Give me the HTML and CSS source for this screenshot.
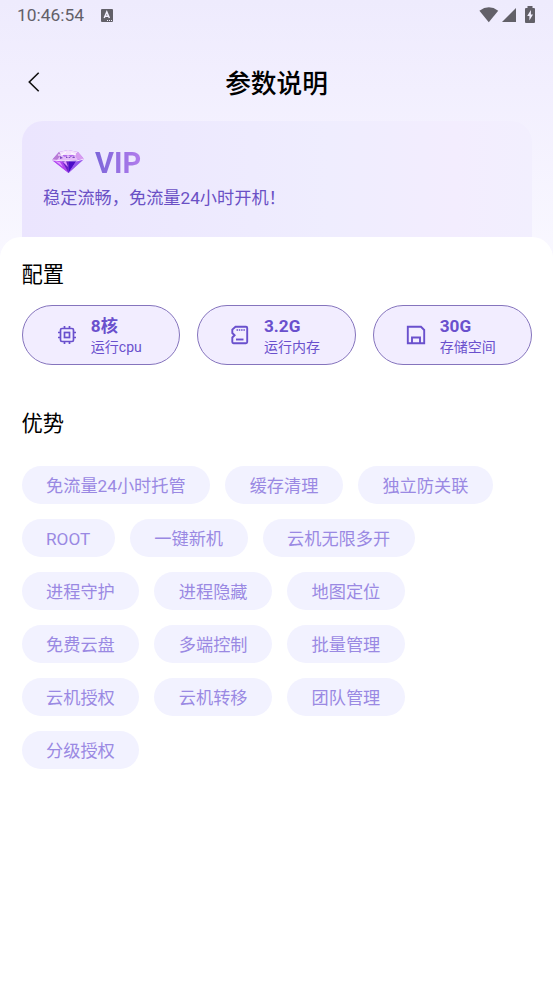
FILE: index.html
```html
<!DOCTYPE html>
<html lang="zh-CN">
<head>
<meta charset="utf-8">
<title>参数说明</title>
<meta name="viewport" content="width=device-width, initial-scale=1">
<link rel="stylesheet" href="styles.css">
</head>
<body>
<div class="status-bar">
  <span class="time">10:46:54</span>
  <svg class="ime" width="12" height="13" viewBox="0 0 12 13"><rect width="12" height="13" rx="1" fill="#626068"/><path d="M3.2 9L5.800 3L8.400 9M4.200 7.200h3.400" fill="none" stroke="#f2effd" stroke-width="1.500"/><path d="M6 11.500h1M8 11.500h1M10 11.500h1" stroke="#f2effd"/></svg>
  <div class="status-icons">
    <svg width="20" height="16" viewBox="0 0 20 16"><path d="M.4 3.7Q10-3 19.2 3.7L9.8 15.3z" fill="#626068"/></svg>
    <svg width="14" height="14" viewBox="0 0 14 14"><path d="M14 0v14H0z" fill="#626068"/></svg>
    <svg width="10" height="17" viewBox="0 0 10 17"><path d="M2.5 0h5v2H9q1 0 1 1v13q0 1-1 1H1q-1 0-1-1V3q0-1 1-1h1.500z" fill="#626068"/><path d="M5.900 4L2.200 10h2.200v4.500L8 8.500H5.900z" fill="#f2effd"/></svg>
  </div>
</div>

<div class="nav">
  <a class="back" href="#"><svg width="12" height="20" viewBox="0 0 12 20"><path d="M10.700.7L1.300 10l9.400 9.300" fill="none" stroke="#111" stroke-width="1.600"/></svg></a>
  <h1>参数说明</h1>
</div>

<div class="vip-card">
  <div class="vip-title">
    <svg width="34" height="26" viewBox="0 0 34 26">
      <path d="M1 12L8 4L17 2L27 4L33 11L17.500 25z" fill="#b56bef"/>
      <path d="M8 4L17 2L27 4L24 7L10 7z" fill="#f3e2fc"/>
      <path d="M1 12L8 4L10 7L6 12z" fill="#b87bd6"/>
      <path d="M27 4L33 11L27 12L24 7z" fill="#d79cf0"/>
      <path d="M6 12L10 7L14 9L17 7L20 9L24 7L27 12L17 13z" fill="#e4bdf8"/>
      <path d="M9 8l3 2-3 1zM15 8l2 2 3-2-1 2h-4zM23 8l1 2h-3z" fill="#7c4bc0"/>
      <path d="M1 12L11 13L17.500 25z" fill="#b044ef"/>
      <path d="M11 13L18 13L17.500 25z" fill="#6820c6"/>
      <path d="M18 13L26 12L17.500 25z" fill="#4a0cc8"/>
      <path d="M26 12L33 11L17.500 25z" fill="#9557ed"/>
      <path d="M12 14l3-1 2 6zM4 13l5 1 3 5z" fill="#e09aff"/>
      <path d="M1 12L11 12.800H26L33 11" fill="none" stroke="#f8eaff"/>
      <path d="M7 7h5M20 5l5 2M15 4l-4 3" stroke="#fff"/>
    </svg>
    <span>VIP</span>
  </div>
  <p>稳定流畅，免流量24小时开机！</p>
</div>

<div class="panel">
  <h2>配置</h2>
  <div class="specs">
    <div class="spec">
      <svg width="20" height="20" viewBox="0 0 20 20" fill="none" stroke="#6a50cd" stroke-width="1.700"><rect x="3.500" y="3.500" width="13" height="13" rx="1.500"/><rect x="7.500" y="7.500" width="5" height="5"/><path d="M7.500 1v2.500M12.500 1v2.500M7.500 16.500V19M12.500 16.500V19M1 7.500h2.500M1 12.500h2.500M16.500 7.500H19M16.500 12.500H19"/></svg>
      <div><b>8核</b><small>运行cpu</small></div>
    </div>
    <div class="spec">
      <svg width="20" height="20" viewBox="0 0 20 20" fill="none" stroke="#6a50cd" stroke-width="1.900"><path d="M5.500 1.800H16q1.200 0 1.200 1.200v14q0 1.200-1.200 1.200H3.500q-1.200 0-1.200-1.200v-4.500L4.600 10.300L2.300 8V4.600z"/><path d="M6.500 5h8.500" stroke-width="1.500" stroke-dasharray="1.500 .8"/><path d="M6 14.500h7.500"/></svg>
      <div><b>3.2G</b><small>运行内存</small></div>
    </div>
    <div class="spec">
      <svg width="20" height="20" viewBox="0 0 20 20" fill="none" stroke="#6a50cd" stroke-width="1.900"><path d="M1.800 1.800H15L18.200 5v13.200H1.800z"/><path d="M6 18v-5.500h8V18"/></svg>
      <div><b>30G</b><small>存储空间</small></div>
    </div>
  </div>

  <h2>优势</h2>
  <div class="tags">
    <span>免流量24小时托管</span>
    <span>缓存清理</span>
    <span>独立防关联</span>
    <span>ROOT</span>
    <span>一键新机</span>
    <span>云机无限多开</span>
    <span>进程守护</span>
    <span>进程隐藏</span>
    <span>地图定位</span>
    <span>免费云盘</span>
    <span>多端控制</span>
    <span>批量管理</span>
    <span>云机授权</span>
    <span>云机转移</span>
    <span>团队管理</span>
    <span>分级授权</span>
  </div>
</div>
</body>
</html>
```
FILE: styles.css
```css
* {
  box-sizing: border-box;
}
body {
  margin: 0;
  min-height: 984px;
  display: flex;
  flex-direction: column;
  background: linear-gradient(#eeebfd 0, #f2effe 90px, #f9f8ff 260px);
  font-family: Roboto, "Noto Sans CJK SC", sans-serif;
  color: #000;
}
h1, h2, p {
  margin: 0;
  font-weight: normal;
}
svg {
  display: block;
  flex: none;
}

/* status bar */
.status-bar {
  height: 30px;
  padding: 0 18px 0 17px;
  display: flex;
  align-items: center;
  color: #626068;
}
.time {
  font-size: 17.4px;
  line-height: 30px;
  width: 84px;
}
.status-icons {
  margin-left: auto;
  display: flex;
  align-items: center;
}
.status-icons svg + svg {
  margin-left: 3px;
}
.status-icons svg:last-child {
  margin-left: 9px;
  margin-top: -2px;
}

.nav {
  height: 91px;
  padding: 0 28px;
  display: grid;
  grid-template-columns: 12px 1fr 12px;
  align-items: center;
}
.nav .back {
  padding-top: 13px;
}
.nav h1 {
  font-size: 25.7px;
  font-weight: 500;
  line-height: 36px;
  text-align: center;
  padding-top: 16px;
}

.vip-card {
  height: 137px;
  margin: 0 21px 0 22px;
  padding: 25px 21px;
  border-radius: 21px 21px 0 0;
  background: linear-gradient(90deg, #ebe5fe, #efedfe 60%, #f3edfe 85%, #f2effe);
  color: #6a50c5;
}
.vip-title {
  display: flex;
  align-items: center;
  height: 36px;
  padding-left: 8px;
}
.vip-title svg {
  margin-top: -7px;
}
.vip-title span {
  margin: -2px 0 0 10px;
  font-size: 29px;
  line-height: 36px;
  font-weight: bold;
  background: linear-gradient(90deg, #7c65d9, #b17cec);
  -webkit-background-clip: text;
  background-clip: text;
  color: transparent;
}
.vip-card p {
  font-size: 17.2px;
  line-height: 32px;
  white-space: nowrap;
}

.panel {
  flex: 1;
  margin-top: -21px;
  padding: 22px 21.5px 0;
  border-radius: 21px 21px 0 0;
  background: #fff;
}
.panel h2 {
  font-size: 21.3px;
  line-height: 32px;
}
.specs {
  display: grid;
  grid-template-columns: repeat(3, 1fr);
  gap: 17px;
  margin: 14px 0 43px;
}
.spec {
  height: 60px;
  padding: 3px 3px 0 0;
  display: flex;
  align-items: center;
  justify-content: center;
  gap: 14px;
  border: 1px solid #8574bd;
  border-radius: 30px;
  background: #f2edff;
  color: #6a50cd;
}
.spec svg {
  margin-top: -3px;
}
.spec b,
.spec small {
  display: block;
  line-height: 21px;
}
.spec b {
  font-size: 17.2px;
}
.spec small {
  font-size: 14px;
}

.tags {
  display: flex;
  flex-wrap: wrap;
  gap: 15px;
  margin-top: 26px;
}
.tags span {
  height: 38px;
  padding: 0 24.5px;
  border-radius: 19px;
  background: #f2f2ff;
  color: #9a89e3;
  font-size: 17.2px;
  line-height: 40px;
}
```
